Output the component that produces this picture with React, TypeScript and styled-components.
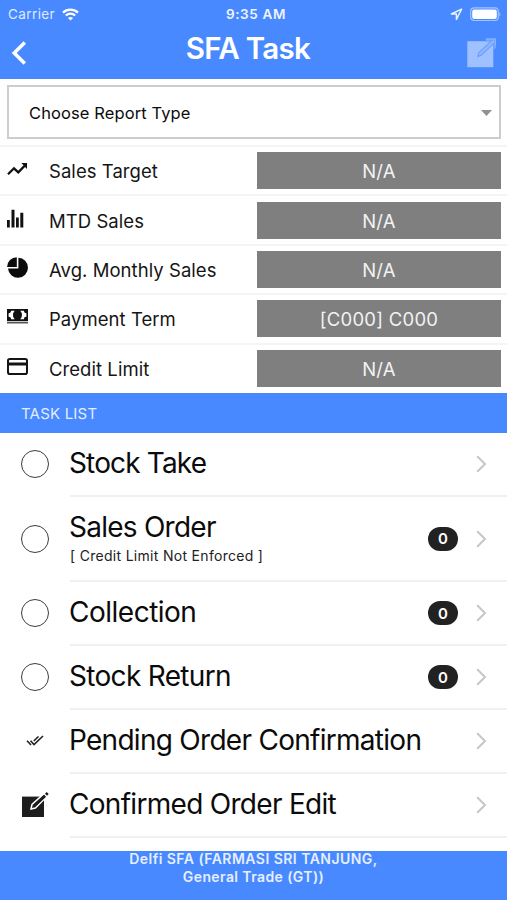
import React from "react";
import styled, { createGlobalStyle } from "styled-components";

const BLUE = "#4889ff";

const GlobalStyle = createGlobalStyle`
  * { box-sizing: border-box; }
  body {
    margin: 0;
    background: #fff;
    font-family: Inter, "Liberation Sans", sans-serif;
    color: #0b0b0b;
  }
  svg { display: block; flex: none; }
`;

const Screen = styled.div`
  width: 507px;
  height: 900px;
  display: flex;
  flex-direction: column;
  overflow: hidden;
  background: #fff;
`;

const Header = styled.header`
  height: 79px;
  flex: none;
  background: ${BLUE};
  color: #fff;
`;

const StatusBar = styled.div`
  height: 27px;
  display: grid;
  grid-template-columns: 1fr auto 1fr;
  align-items: center;
  padding: 1px 6px 0 8px;
  font-size: 13.5px;
`;

const StatusSide = styled.div<{ $end?: boolean }>`
  display: flex;
  align-items: center;
  gap: 7px;
  justify-content: ${(p) => (p.$end ? "flex-end" : "flex-start")};
`;

const Carrier = styled.span`
  color: #dfeaff;
  letter-spacing: 0.4px;
`;

const Clock = styled.span`
  font-weight: 600;
  font-size: 13.5px;
  letter-spacing: 0.65px;
  padding-left: 3px;
  color: #eef4ff;
`;

const NavBar = styled.div`
  height: 52px;
  display: grid;
  grid-template-columns: 40px 1fr 40px;
  align-items: center;
  padding: 0 11px 0 11px;
`;

const Title = styled.h1`
  margin: 0;
  padding: 0 11px 10px 0;
  text-align: center;
  font-size: 29.5px;
  line-height: 36px;
  font-weight: 600;
  letter-spacing: -0.7px;
`;

const NavIcon = styled.div<{ $end?: boolean }>`
  display: flex;
  justify-content: ${(p) => (p.$end ? "flex-end" : "flex-start")};
`;

const Select = styled.div`
  flex: none;
  height: 54px;
  margin: 6px 6px 6px 7px;
  border: 2px solid #cdcdcd;
  display: flex;
  align-items: center;
  justify-content: space-between;
  padding: 1px 7px 0 20px;
  font-size: 16.5px;
  letter-spacing: 0.1px;
`;

const Stats = styled.section`
  flex: none;
  height: 248px;
  display: grid;
  grid-template-rows: repeat(5, 49.4px);
`;

const StatRow = styled.div`
  display: grid;
  grid-template-columns: 49px 208px 244px;
  align-items: center;
  border-top: 2px solid #f4f4f4;
`;

const StatIcon = styled.div`
  padding: 0 0 4px 7px;
`;

const StatLabel = styled.span`
  padding-top: 1px;
  font-size: 18.5px;
  letter-spacing: 0.05px;
  color: #151515;
`;

const StatValue = styled.div`
  height: 37px;
  padding-top: 1px;
  display: flex;
  align-items: center;
  justify-content: center;
  background: #7f7f7f;
  color: #f2f2f2;
  font-size: 18.5px;
  letter-spacing: 0.25px;
`;

const SectionHeader = styled.div`
  flex: none;
  height: 40px;
  display: flex;
  align-items: center;
  padding: 1px 0 0 21px;
  background: ${BLUE};
  color: #e3edff;
  font-size: 15px;
  letter-spacing: 0.2px;
`;

const Tasks = styled.main`
  flex: none;
  height: 418px;
`;

const TaskRow = styled.div<{ $height: number }>`
  height: ${(p) => p.$height}px;
  display: grid;
  grid-template-columns: 70px 1fr;
`;

const TaskLead = styled.div`
  display: flex;
  align-items: center;
  justify-content: center;
  padding-bottom: 2px;
`;

const Circle = styled.span`
  width: 28px;
  height: 28px;
  border: 1.5px solid #3c3c3c;
  border-radius: 50%;
`;

const TaskBody = styled.div`
  display: flex;
  align-items: center;
  border-bottom: 2px solid #f0f0f0;
  padding-right: 20px;
`;

const TaskText = styled.div`
  flex: 1;
  padding-bottom: 2px;
`;

const TaskName = styled.div<{ $spacing: number }>`
  margin-left: -1px;
  font-size: 28px;
  line-height: 34px;
  letter-spacing: ${(p) => p.$spacing}px;
  white-space: nowrap;
`;

const TaskNote = styled.div`
  margin-top: 3px;
  font-size: 14px;
  line-height: 18px;
  letter-spacing: 0.3px;
  color: #222;
  white-space: nowrap;
`;

const Badge = styled.span`
  width: 30px;
  height: 24px;
  margin-right: 18px;
  border-radius: 12px;
  display: flex;
  align-items: center;
  justify-content: center;
  background: #222;
  color: #fff;
  font-size: 15px;
  font-weight: 600;
`;

const Footer = styled.footer`
  flex: 1;
  background: ${BLUE};
  color: #e6efff;
  text-align: center;
  font-size: 14px;
  font-weight: 600;
`;

const FooterLine = styled.div<{ $spacing: number }>`
  height: 18px;
  line-height: 16px;
  letter-spacing: ${(p) => p.$spacing}px;
`;

const WifiIcon = () => (
  <svg width="17" height="13" viewBox="0 0 17 13" fill="none" stroke="#fff">
    <path d="M1 4.6C5.2.7 11.8.7 16 4.6" strokeWidth="2.2" />
    <path d="M3.8 7.5c2.7-2.5 6.7-2.5 9.4 0" strokeWidth="2.1" />
    <path d="M8.5 12.6 5.9 9.9c1.4-1.3 3.8-1.3 5.2 0z" fill="#fff" stroke="none" />
  </svg>
);

const LocationIcon = () => (
  <svg width="13" height="13" viewBox="0 0 13 13" fill="none" stroke="#eef4ff" strokeWidth="1.4" strokeLinejoin="round">
    <path d="M11.6 1.2 1.3 6h5.1v5.4z" />
  </svg>
);

const BatteryIcon = () => (
  <svg width="31" height="15" viewBox="0 0 31 15">
    <rect x=".7" y=".9" width="27.6" height="12.6" rx="3.5" fill="none" stroke="#a3c3ff" strokeWidth="1.2" />
    <rect x="2.2" y="2.5" width="24.6" height="9.4" rx="2" fill="#fff" />
    <path d="M29.4 5v4.6c1.4-.6 1.4-4 0-4.6z" fill="#a3c3ff" />
  </svg>
);

const BackIcon = () => (
  <svg width="16" height="24" viewBox="0 0 16 24" fill="none" stroke="#fff" strokeWidth="3.5">
    <path d="M13.8 1.5 3.2 12l10.6 10.5" />
  </svg>
);

const ComposeIcon = () => (
  <svg width="30" height="30" viewBox="0 0 30 30">
    <path d="M1.3 3.2h26v26h-26z" fill="#9fc1ff" />
    <path d="M19.6.9H30v9.2l-2.6 2V5.4l-2-1.8h-5.8z" fill="#6fa2ff" />
    <path d="m12 18.4.9-3.6L27.2 1.5l2.2 2.2L15.3 17.1z" fill="#9fc1ff" stroke="#6c9fff" strokeWidth="1.3" />
    <path d="m13.8 16.4 13.5-12.8" stroke="#78a8ff" strokeWidth=".8" />
    <path d="M20 1h9.3v6.6" fill="none" stroke="#86b1ff" strokeWidth="1.3" />
  </svg>
);

const TrendIcon = () => (
  <svg width="21" height="14" viewBox="0 0 21 14" fill="none" stroke="#111" strokeWidth="2.3">
    <path d="m1 12.3 6-6 4.3 4.1L18.4 3" />
    <path d="M14.4 1H20v5.9z" fill="#111" stroke="none" />
  </svg>
);

const BarsIcon = () => (
  <svg width="17" height="19" viewBox="0 0 17 19" fill="#111">
    <path d="M0 11h2.8v7.5H0zM4.5.7h3v17.8h-3zM9 8.5h2.8v10H9zM13.3 3.8h3v14.7h-3z" />
  </svg>
);

const PieIcon = () => (
  <svg width="21" height="21" viewBox="0 0 21 21" fill="#0b0b0b">
    <path d="M11.4.7A10 10 0 1 1 1 11.5h10.4z" />
    <path d="M9.8.2v9.7H.1A9.8 9.8 0 0 1 9.8.2z" />
  </svg>
);

const CashIcon = () => (
  <svg width="21" height="16" viewBox="0 0 21 16">
    <path d="M0 0h21v12H0z" fill="#111" />
    <path d="M4 1.8h3.8c-2.4 2.3-2.4 6.1 0 8.4H4C4 8.6 3.2 7.8 1.6 7.8V4.2C3.2 4.2 4 3.4 4 1.8zM17 1.8h-3.8c2.4 2.3 2.4 6.1 0 8.4H17c0-1.6.8-2.4 2.4-2.4V4.2C17.8 4.2 17 3.4 17 1.8z" fill="#fff" />
    <path d="M0 13.6h21" stroke="#555" strokeWidth="1.8" />
  </svg>
);

const CardIcon = () => (
  <svg width="21" height="17" viewBox="0 0 21 17" fill="none" stroke="#151515">
    <rect x="1" y="1" width="19" height="15" rx="1.8" strokeWidth="2" />
    <path d="M1 6h19" strokeWidth="3" />
  </svg>
);

const CaretIcon = () => (
  <svg width="11" height="6" viewBox="0 0 11 6">
    <path d="M0 0h11L5.5 6z" fill="#919191" />
  </svg>
);

const ChevronIcon = () => (
  <svg width="11" height="18" viewBox="0 0 11 18" fill="none" stroke="#c6c6c6" strokeWidth="2">
    <path d="m1.2 1.2 7.8 7.8-7.8 7.8" />
  </svg>
);

const DoubleCheckIcon = () => (
  <svg width="18" height="12" viewBox="0 0 18 12" fill="none" stroke="#222" strokeWidth="1.6">
    <path d="m1 5.8 4 4.2M4.5 5.8 8 9.6 17 1M7.8 6 12.5 1.5" />
  </svg>
);

const EditIcon = () => (
  <svg width="27" height="26" viewBox="0 0 27 26">
    <path d="M0 4.6h22v20.4H0z" fill="#1d1d1d" />
    <path d="m9 17 1-4.6L22 1.6l2.8 2.9L13.4 16z" fill="#1d1d1d" stroke="#fff" strokeWidth="1.5" />
    <path d="m23 1.8 1.7-1.7 2 2L25 3.8zM21.9 2.9l2 2-10.7 9.9-1.9-1.9z" fill="#1d1d1d" />
  </svg>
);

const stats = [
  { icon: <TrendIcon />, label: "Sales Target", value: "N/A" },
  { icon: <BarsIcon />, label: "MTD Sales", value: "N/A" },
  { icon: <PieIcon />, label: "Avg. Monthly Sales", value: "N/A" },
  { icon: <CashIcon />, label: "Payment Term", value: "[C000] C000" },
  { icon: <CardIcon />, label: "Credit Limit", value: "N/A" },
];

const tasks = [
  { name: "Stock Take", height: 64, spacing: -0.85, icon: <Circle /> },
  { name: "Sales Order", height: 85, spacing: -0.75, icon: <Circle />, note: "[ Credit Limit Not Enforced ]", count: 0 },
  { name: "Collection", height: 64, spacing: -0.5, icon: <Circle />, count: 0 },
  { name: "Stock Return", height: 64, spacing: -0.68, icon: <Circle />, count: 0 },
  { name: "Pending Order Confirmation", height: 64, spacing: -0.72, icon: <DoubleCheckIcon /> },
  { name: "Confirmed Order Edit", height: 64, spacing: -0.7, icon: <EditIcon /> },
];

export default function App() {
  return (
    <Screen>
      <GlobalStyle />
      <Header>
        <StatusBar>
          <StatusSide>
            <Carrier>Carrier</Carrier>
            <WifiIcon />
          </StatusSide>
          <Clock>9:35 AM</Clock>
          <StatusSide $end>
            <LocationIcon />
            <BatteryIcon />
          </StatusSide>
        </StatusBar>
        <NavBar>
          <NavIcon>
            <BackIcon />
          </NavIcon>
          <Title>SFA Task</Title>
          <NavIcon $end>
            <ComposeIcon />
          </NavIcon>
        </NavBar>
      </Header>
      <Select>
        <span>Choose Report Type</span>
        <CaretIcon />
      </Select>
      <Stats>
        {stats.map((s) => (
          <StatRow key={s.label}>
            <StatIcon>{s.icon}</StatIcon>
            <StatLabel>{s.label}</StatLabel>
            <StatValue>{s.value}</StatValue>
          </StatRow>
        ))}
      </Stats>
      <SectionHeader>TASK LIST</SectionHeader>
      <Tasks>
        {tasks.map((t) => (
          <TaskRow key={t.name} $height={t.height}>
            <TaskLead>{t.icon}</TaskLead>
            <TaskBody>
              <TaskText>
                <TaskName $spacing={t.spacing}>{t.name}</TaskName>
                {t.note && <TaskNote>{t.note}</TaskNote>}
              </TaskText>
              {t.count !== undefined && <Badge>{t.count}</Badge>}
              <ChevronIcon />
            </TaskBody>
          </TaskRow>
        ))}
      </Tasks>
      <Footer>
        <FooterLine $spacing={0.46}>Delfi SFA (FARMASI SRI TANJUNG,</FooterLine>
        <FooterLine $spacing={0.4}>General Trade (GT))</FooterLine>
      </Footer>
    </Screen>
  );
}
